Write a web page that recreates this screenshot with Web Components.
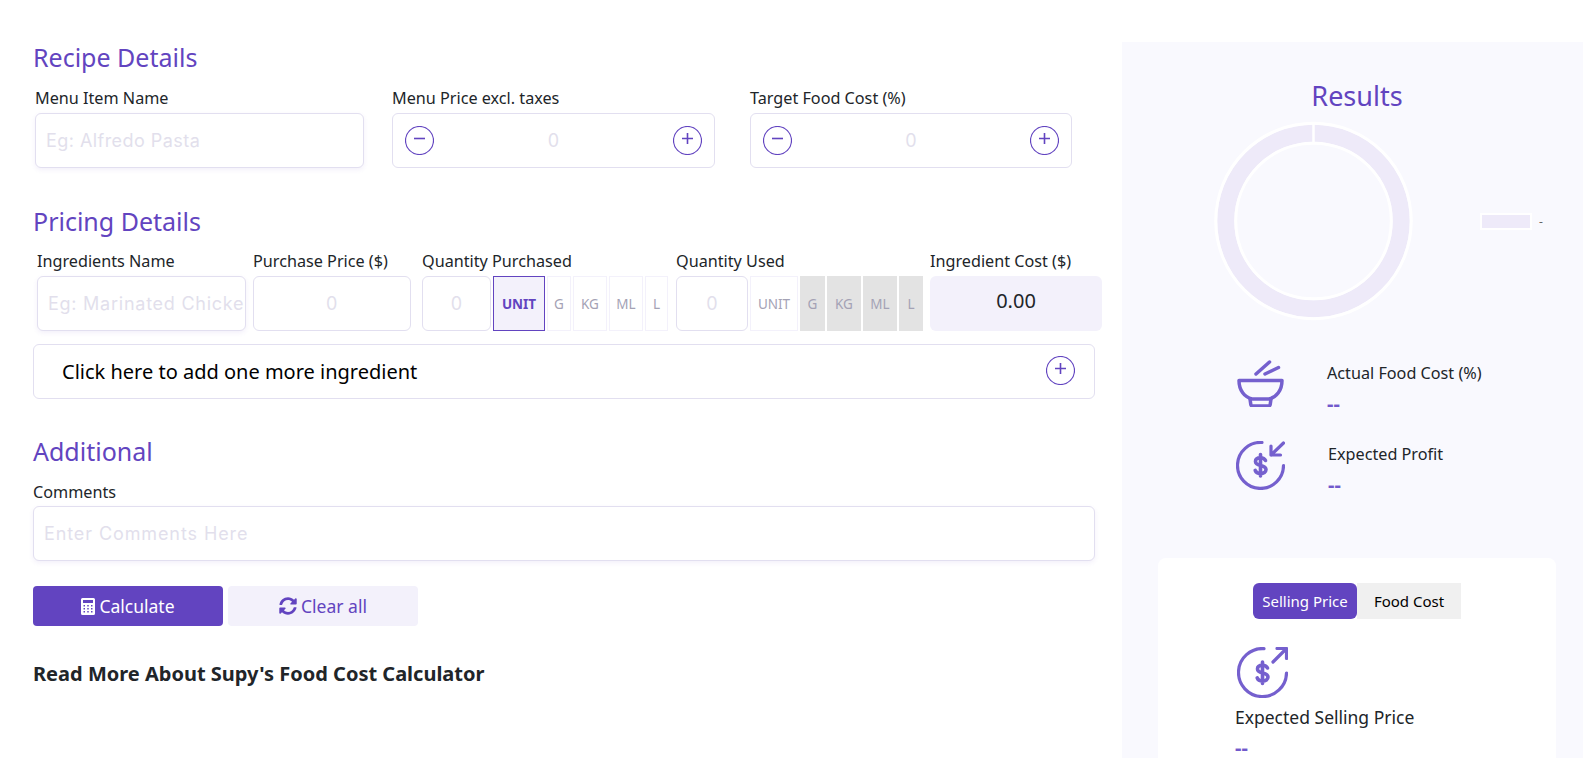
<!DOCTYPE html>
<html lang="en">
<head>
<meta charset="utf-8">
<title>Food Cost Calculator</title>
<style>
  html, body { margin: 0; height: 758px; overflow: hidden; background: #fff; }
  body { font-family: "Noto Sans", "Liberation Sans", sans-serif; color: #212529; }
</style>
</head>
<body>
<calc-page>
  <calc-heading>Recipe Details</calc-heading>
  <calc-row style="padding-left: 2px; margin-top: 13px; --label-gap: 4px">
    <calc-field label="Menu Item Name" style="width: 329px; margin-right: 28px"><calc-text-box text="Eg: Alfredo Pasta" shadow></calc-text-box></calc-field>
    <calc-field label="Menu Price excl. taxes" style="width: 323px; margin-right: 35px"><calc-stepper></calc-stepper></calc-field>
    <calc-field label="Target Food Cost (%)" style="width: 322px"><calc-stepper></calc-stepper></calc-field>
  </calc-row>

  <calc-heading style="margin-top: 36px">Pricing Details</calc-heading>
  <calc-row style="padding-left: 4px; margin-top: 12px; --label-gap: 4px">
    <calc-field label="Ingredients Name" style="width: 209px; margin-right: 7px"><calc-text-box text="Eg: Marinated Chicken" shadow style="--spacing: .75px"></calc-text-box></calc-field>
    <calc-field label="Purchase Price ($)" style="width: 158px; margin-right: 11px"><calc-text-box text="0" center></calc-text-box></calc-field>
    <calc-field label="Quantity Purchased" style="width: 245px; margin-right: 9px"><calc-units cols="69px 52px 24px 34px 34px 23px" active="UNIT"></calc-units></calc-field>
    <calc-field label="Quantity Used" style="width: 247px; margin-right: 7px"><calc-units cols="72px 48px 25px 34px 34px 24px" disabled></calc-units></calc-field>
    <calc-field label="Ingredient Cost ($)" style="width: 172px"><calc-cost value="0.00"></calc-cost></calc-field>
  </calc-row>
  <calc-add-row style="margin-top: 13px">Click here to add one more ingredient</calc-add-row>

  <calc-heading style="margin-top: 35px">Additional</calc-heading>
  <calc-field label="Comments" style="margin-top: 13px; --label-gap: 3px"><calc-text-box text="Enter Comments Here" shadow style="--spacing: .9px"></calc-text-box></calc-field>

  <calc-row style="margin-top: 25px; gap: 5px">
    <calc-button kind="primary" icon="calculator">Calculate</calc-button>
    <calc-button kind="soft" icon="sync">Clear all</calc-button>
  </calc-row>
  <calc-read-more>Read More About Supy's Food Cost Calculator</calc-read-more>

  <calc-results slot="side"></calc-results>
</calc-page>

<script>
const ICONS = {
  bowl: `<svg width="47" height="47" viewBox="0 0 47 47" fill="none" stroke="#7560ce" stroke-width="3.500" stroke-linecap="round" stroke-linejoin="round">
    <path d="M19 14 32.500 2M28 14l13.500-6.500"/>
    <path d="M2 20.500h43c0 10-5.500 16.500-13 18.500H15C7.500 37 2 30.500 2 20.500z"/>
    <path d="m13 39 .8 5.500q.2 1.500 2 1.500h15.400q1.800 0 2-1.500L34 39"/>
  </svg>`,
  moneyIn: `<svg width="49" height="49" viewBox="0 0 49 49" fill="none" stroke="#7560ce" stroke-width="3.200" stroke-linecap="round" stroke-linejoin="round">
    <path d="M26 1.500A23 23 0 1 0 47.500 24.500"/>
    <path d="M47.500 2 35 14M35 5v9h9.500"/>
    <path stroke-width="3.600" d="M29.500 19.500c-.8-1.800-2.700-2.800-5-2.800-3 0-5 1.400-5 3.700 0 5.500 10.500 2.700 10.500 8.200 0 2.400-2.300 3.900-5.500 3.900-2.500 0-4.600-1.100-5.300-3.100M24.500 13.500v21.500"/>
  </svg>`,
  moneyOut: `<svg width="51" height="51" viewBox="0 0 51 51" fill="none" stroke="#7560ce" stroke-width="3.200" stroke-linecap="round" stroke-linejoin="round">
    <path d="M27 1.600A24 24 0 1 0 49.500 26"/>
    <path d="M36 15 49 2M40 1.500h9.500V11.500"/>
    <path stroke-width="3.600" d="M30.500 21c-.8-1.800-2.700-2.800-5-2.800-3 0-5 1.400-5 3.700 0 5.500 10.500 2.700 10.500 8.200 0 2.400-2.300 3.900-5.500 3.900-2.500 0-4.600-1.100-5.300-3.100M25.500 15v21.500"/>
  </svg>`,
  calculator: `<svg width="14" height="17" viewBox="0 0 14 17" fill="currentColor">
    <path fill-rule="evenodd" d="M1.500 0h11A1.500 1.500 0 0 1 14 1.500v14a1.500 1.500 0 0 1-1.500 1.500h-11A1.500 1.500 0 0 1 0 15.500v-14A1.500 1.500 0 0 1 1.500 0zM2 2v3h10V2zm.5 5v1.500H4V7zm3.750 0v1.500h1.500V7zM10 7v1.500h1.500V7zm-7.500 3v1.500H4V10zm3.750 0v1.500h1.500V10zM10 10v1.500h1.500V10zm-7.500 3v1.500H4V13zm3.750 0v1.500h1.500V13zM10 13v1.500h1.500V13z"/>
  </svg>`,
  sync: `<svg width="18" height="18" viewBox="0 0 512 512" fill="currentColor"><path d="M370.720 133.280C339.458 104.008 298.888 87.962 255.848 88c-77.458.068-144.328 53.178-162.791 126.850-1.344 5.363-6.122 9.150-11.651 9.150H24.103c-7.498 0-13.194-6.807-11.807-14.176C33.933 94.924 134.813 8 256 8c66.448 0 126.791 26.136 171.315 68.685L463.030 40.970C478.149 25.851 504 36.559 504 57.941V192c0 13.255-10.745 24-24 24H345.941c-21.382 0-32.090-25.851-16.971-40.971l41.750-41.749zM32 296h134.059c21.382 0 32.090 25.851 16.971 40.971l-41.750 41.750c31.262 29.273 71.835 45.319 114.876 45.280 77.418-.07 144.315-53.144 162.787-126.849 1.344-5.363 6.122-9.150 11.651-9.150h57.304c7.498 0 13.194 6.807 11.807 14.176C478.067 417.076 377.187 504 256 504c-66.448 0-126.791-26.136-171.315-68.685L48.970 471.030C33.851 486.149 8 475.441 8 454.059V320c0-13.255 10.745-24 24-24z"/></svg>`
};

const roundIcon = (plus) => `<svg width="29" height="29" viewBox="0 0 29 29" fill="none" stroke="#6244c0">
  <circle cx="14.500" cy="14.500" r="14" stroke-width="1.200"/>
  <path stroke-width="1.600" d="M9 12.500h11${plus ? 'M14.500 7v11' : ''}"/>
</svg>`;

class CalcPage extends HTMLElement {
  constructor() {
    super();
    this.shadow = this.attachShadow({ mode: 'open' });
    this.shadow.innerHTML = `
      <style>
        :host { display: grid; grid-template-columns: 1122px 461px; height: 758px; overflow: hidden; }
        .main { box-sizing: border-box; padding: 40px 27px 0 33px; min-width: 0; }
        .side { margin-top: 42px; min-width: 0; background: #f9f9fe; }
      </style>
      <div class="main"><slot></slot></div>
      <div class="side"><slot name="side"></slot></div>
    `;
  }
}

class CalcHeading extends HTMLElement {
  constructor() {
    super();
    this.attachShadow({ mode: 'open' }).innerHTML = `
      <style>
        :host { display: block; height: 34px; line-height: 34px; font-size: 25px; color: #6244c0; }
      </style>
      <slot></slot>
    `;
  }
}

class CalcRow extends HTMLElement {
  constructor() {
    super();
    this.attachShadow({ mode: 'open' }).innerHTML = `
      <style>:host { display: flex; align-items: flex-start; }</style>
      <slot></slot>
    `;
  }
}

class CalcField extends HTMLElement {
  constructor() {
    super();
    this.attachShadow({ mode: 'open' }).innerHTML = `
      <style>
        :host { display: block; flex: none; }
        .label { height: 22px; line-height: 22px; margin-bottom: var(--label-gap, 3px); font-size: 16.200px; color: #212529; white-space: nowrap; }
      </style>
      <div class="label">${this.getAttribute('label')}</div>
      <slot></slot>
    `;
  }
}

class CalcTextBox extends HTMLElement {
  constructor() {
    super();
    const center = this.hasAttribute('center');
    this.attachShadow({ mode: 'open' }).innerHTML = `
      <style>
        :host {
          display: flex; align-items: center; box-sizing: border-box; height: 55px;
          padding: 0 3px 0 10px; overflow: hidden; white-space: nowrap;
          border: 1px solid #e2dff0; border-radius: 6px; background: #fff;
          font-family: Inter, sans-serif; font-size: 18px; letter-spacing: var(--spacing, .45px); color: #e2dfec;
          ${this.hasAttribute('shadow') ? 'box-shadow: 0 2px 5px rgba(98, 68, 192, .08);' : ''}
          ${center ? 'justify-content: center; padding: 0;' : ''}
        }
      </style>
      ${this.getAttribute('text')}
    `;
  }
}

class CalcStepper extends HTMLElement {
  constructor() {
    super();
    this.attachShadow({ mode: 'open' }).innerHTML = `
      <style>
        :host {
          display: flex; align-items: center; justify-content: space-between; box-sizing: border-box;
          height: 55px; padding: 0 11.500px; border: 1px solid #e2dff0; border-radius: 6px; background: #fff;
          font-family: Inter, sans-serif; font-size: 18px; color: #e2dfec;
        }
        svg { display: block; }
      </style>
      ${roundIcon(false)}<span>0</span>${roundIcon(true)}
    `;
  }
}

class CalcUnits extends HTMLElement {
  constructor() {
    super();
    this.shadow = this.attachShadow({ mode: 'open' });
    this.render();
  }

  render() {
    const disabled = this.hasAttribute('disabled');
    const active = this.getAttribute('active');
    const cells = ['UNIT', 'G', 'KG', 'ML', 'L'].map((unit) => {
      const cls = [unit === active ? 'active' : '', disabled && unit !== 'UNIT' ? 'off' : ''].join(' ');
      return `<div class="cell ${cls}">${unit}</div>`;
    }).join('');
    this.shadow.innerHTML = `
      <style>
        :host { display: grid; grid-template-columns: ${this.getAttribute('cols')}; column-gap: 2px; height: 55px; }
        .value {
          display: flex; align-items: center; justify-content: center; border: 1px solid #e2dff0; border-radius: 6px;
          font-family: Inter, sans-serif; font-size: 18px; color: #e2dfec;
        }
        .cell {
          display: flex; align-items: center; justify-content: center; box-sizing: border-box;
          border: 1px solid #f3f1fb; font-size: 13.500px; color: #a4a2b5;
        }
        .active { border-color: #6244c0; background: #f3f1fb; color: #6244c0; font-weight: 700; }
        .off { border-color: #e3e3e3; background: #e3e3e3; }
      </style>
      <div class="value">0</div>
      ${cells}
    `;
  }
}

class CalcCost extends HTMLElement {
  constructor() {
    super();
    this.attachShadow({ mode: 'open' }).innerHTML = `
      <style>
        :host {
          display: flex; align-items: center; justify-content: center; box-sizing: border-box;
          height: 55px; padding-bottom: 6px; border-radius: 6px; background: #f3f1fb;
          font-size: 20px; color: #212529;
        }
      </style>
      ${this.getAttribute('value')}
    `;
  }
}

class CalcAddRow extends HTMLElement {
  constructor() {
    super();
    this.attachShadow({ mode: 'open' }).innerHTML = `
      <style>
        :host {
          display: flex; align-items: center; justify-content: space-between; box-sizing: border-box;
          height: 55px; padding: 0 19px 0 28px; border: 1px solid #e2dff0; border-radius: 6px;
          font-size: 20px; color: #000;
        }
        svg { display: block; margin-top: -3px; }
      </style>
      <span><slot></slot></span>${roundIcon(true)}
    `;
  }
}

class CalcButton extends HTMLElement {
  constructor() {
    super();
    this.attachShadow({ mode: 'open' }).innerHTML = `
      <style>
        :host {
          display: flex; align-items: center; justify-content: center; gap: 4px; width: 190px; height: 40px;
          border-radius: 4px; font-size: 17.500px;
          ${this.getAttribute('kind') === 'primary' ? 'background: #6244c0; color: #fff;' : 'background: #f3f1fb; color: #6244c0;'}
        }
        svg { display: block; }
      </style>
      ${ICONS[this.getAttribute('icon')]}<slot></slot>
    `;
  }
}

class CalcReadMore extends HTMLElement {
  constructor() {
    super();
    this.attachShadow({ mode: 'open' }).innerHTML = `
      <style>
        :host { display: block; margin-top: 35px; font-size: 20px; line-height: 26px; font-weight: 700; color: #212529; white-space: nowrap; }
      </style>
      <slot></slot>
    `;
  }
}

class CalcDonut extends HTMLElement {
  constructor() {
    super();
    this.attachShadow({ mode: 'open' }).innerHTML = `
      <style>
        :host { display: flex; align-items: center; margin-left: 93px; }
        svg { display: block; flex: none; overflow: visible; }
        .key { box-sizing: border-box; width: 52px; height: 17px; margin-left: 68px; border: 2px solid #fff; background: #eeeaf9; }
        .name { margin-left: 7px; font-size: 12px; color: #666; }
      </style>
      <svg width="197" height="197" viewBox="0 0 197 197" fill="none">
        <circle cx="98.500" cy="98" r="87.750" stroke="#eeeaf9" stroke-width="17"/>
        <circle cx="98.500" cy="98" r="97.750" stroke="#fff" stroke-width="3"/>
        <circle cx="98.500" cy="98" r="77.750" stroke="#fff" stroke-width="3"/>
        <path d="M98.500 1v18" stroke="#fff" stroke-width="2.500"/>
      </svg>
      <div class="key"></div><div class="name">-</div>
    `;
  }
}

class CalcStat extends HTMLElement {
  constructor() {
    super();
    this.attachShadow({ mode: 'open' }).innerHTML = `
      <style>
        :host { display: flex; }
        .icon { flex: none; display: block; margin-top: ${this.getAttribute('lift')}px; }
        .name { height: 22px; line-height: 22px; font-size: 16.200px; color: #212529; white-space: nowrap; }
        .value { height: 24px; line-height: 24px; margin-top: 8px; font-size: 20px; font-weight: 700; color: #7159cc; }
      </style>
      <div class="icon">${ICONS[this.getAttribute('icon')]}</div>
      <div class="text" style="margin-left: ${this.getAttribute('offset')}px">
        <div class="name">${this.getAttribute('label')}</div>
        <div class="value">--</div>
      </div>
    `;
  }
}

class CalcTabs extends HTMLElement {
  constructor() {
    super();
    this.attachShadow({ mode: 'open' }).innerHTML = `
      <style>
        :host { display: flex; justify-content: center; }
        .tab {
          display: flex; align-items: center; justify-content: center; width: 104px; height: 36px;
          font-size: 15px; background: #f0f0f0; color: #000;
        }
        .on { background: #6244c0; color: #fff; border-radius: 6px; }
      </style>
      <div class="tab on">Selling Price</div>
      <div class="tab">Food Cost</div>
    `;
  }
}

class CalcResults extends HTMLElement {
  constructor() {
    super();
    this.attachShadow({ mode: 'open' }).innerHTML = `
      <style>
        :host { display: block; padding-top: 36px; }
        h2 {
          margin: 0 0 9px 9px; height: 36px; line-height: 36px; text-align: center;
          font-size: 27px; font-weight: 400; color: #6244c0;
        }
        .stats { display: flex; flex-direction: column; padding: 42px 0 0 115px; }
        .stats calc-stat + calc-stat { margin-top: 27px; margin-left: -1px; }
        .card {
          box-sizing: border-box; height: 260px; margin: 61px 27px 0 36px; padding: 25px 0 0;
          border-radius: 8px; background: #fff;
        }
        .selling { display: block; padding: 28px 0 0 77px; }
        .selling .art { margin-left: 2px; height: 51px; }
        .selling .name { margin-top: 7px; height: 24px; line-height: 24px; font-size: 17.500px; color: #212529; white-space: nowrap; }
        .selling .value { margin-top: 12px; height: 14px; line-height: 14px; font-size: 20px; font-weight: 700; color: #7159cc; }
      </style>
      <h2>Results</h2>
      <calc-donut></calc-donut>
      <div class="stats">
        <calc-stat icon="bowl" lift="-2" label="Actual Food Cost (%)" offset="43"></calc-stat>
        <calc-stat icon="moneyIn" lift="-2" label="Expected Profit" offset="43"></calc-stat>
      </div>
      <div class="card">
        <calc-tabs></calc-tabs>
        <div class="selling">
          <div class="art">${ICONS.moneyOut}</div>
          <div class="name">Expected Selling Price</div>
          <div class="value">--</div>
        </div>
      </div>
    `;
  }
}

customElements.define('calc-heading', CalcHeading);
customElements.define('calc-row', CalcRow);
customElements.define('calc-field', CalcField);
customElements.define('calc-text-box', CalcTextBox);
customElements.define('calc-stepper', CalcStepper);
customElements.define('calc-units', CalcUnits);
customElements.define('calc-cost', CalcCost);
customElements.define('calc-add-row', CalcAddRow);
customElements.define('calc-button', CalcButton);
customElements.define('calc-read-more', CalcReadMore);
customElements.define('calc-donut', CalcDonut);
customElements.define('calc-stat', CalcStat);
customElements.define('calc-tabs', CalcTabs);
customElements.define('calc-results', CalcResults);
customElements.define('calc-page', CalcPage);
</script>
</body>
</html>
